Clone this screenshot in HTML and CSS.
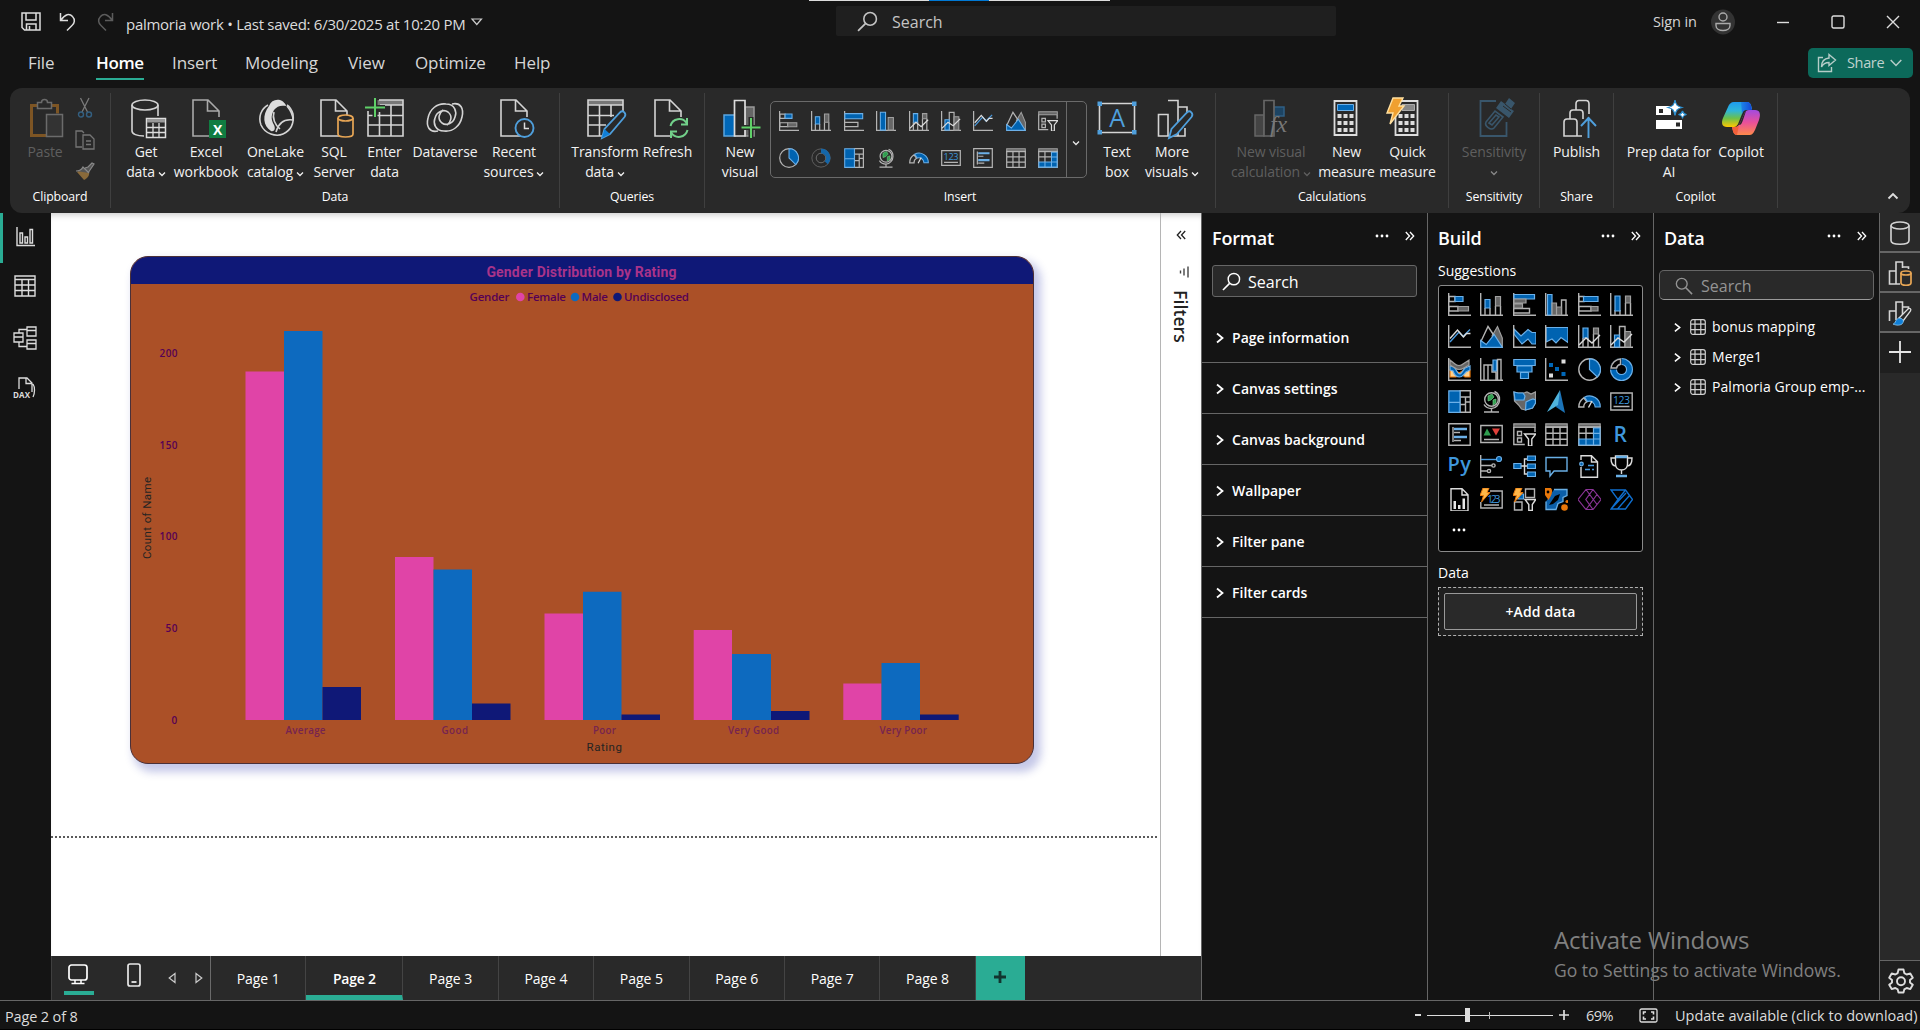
FILE: index.html
```html
<!DOCTYPE html>
<html lang="en">
<head>
<meta charset="utf-8">
<title>palmoria work</title>
<link rel="stylesheet" href="styles.css">
</head>
<body>
<svg class="defs" width="0" height="0" aria-hidden="true">
  <defs>
    <linearGradient id="cpA" x1="0" y1="0" x2="0" y2="1"><stop offset="0" stop-color="#1e9bf0"/><stop offset=".35" stop-color="#2fb6d8"/><stop offset=".65" stop-color="#6cc04a"/><stop offset="1" stop-color="#ffc800"/></linearGradient>
    <linearGradient id="cpB" x1="0" y1="0" x2="0" y2="1"><stop offset="0" stop-color="#a24be0"/><stop offset=".5" stop-color="#e9509a"/><stop offset="1" stop-color="#ff8a4a"/></linearGradient>
    <linearGradient id="cpC" x1="0" y1="0" x2="1" y2="0"><stop offset="0" stop-color="#1c86e8"/><stop offset="1" stop-color="#1546d8"/></linearGradient>

    <!-- chart glyphs, 23 unit box -->
    <symbol id="sbar" viewBox="0 0 23 23"><path class="a" d="M.7 0V22.300H23"/><path class="a" d="M1 3.500h6v5H1zM1 13.500h9v4.500H1z"/><path class="b" d="M7 3.500h8v5H7z"/><path class="g" d="M10 13.500h10.500v4.500H10z"/></symbol>
    <symbol id="scol" viewBox="0 0 23 23"><path class="a" d="M.7 0V22.300H23M5 15v7M10 15v7M15.500 13v9M20.500 13v9"/><path class="b" d="M5 6.500h5v8.500H5z"/><path class="g" d="M15.500 3.500h5V13h-5z"/></symbol>
    <symbol id="cbar" viewBox="0 0 23 23"><path class="a" d="M.7 0V22.300H23M1 15.500h15.500v4.500H1"/><path class="b" d="M1 1.500h20.500V6H1z"/><path class="g" d="M1 6h12v4H1zM1 11h8.500v4H1z"/></symbol>
    <symbol id="ccol" viewBox="0 0 23 23"><path class="a" d="M.7 0V22.300H23M16.500 22V7h4.500v15"/><path class="b" d="M2.500 1.500H7V22H2.500z"/><path class="g" d="M7 10h4.500v12H7zM11.500 14h5v8h-5z"/></symbol>
    <symbol id="cbar2" viewBox="0 0 23 23"><path class="a" d="M.7 0V22.300H23M1 13h15v5H1"/><path class="b" d="M1 3h20.500v6H1z"/></symbol>
    <symbol id="ccol2" viewBox="0 0 23 23"><path class="a" d="M.7 0V22.300H23"/><path class="b" d="M5 1.500h6V22H5z"/><path class="g" d="M14 7.500h6V22h-6z"/></symbol>
    <symbol id="hbar" viewBox="0 0 23 23"><path class="a" d="M.7 0V22.300H23M1 3.500h5v5H1zM1 13.500h12V18H1z"/><path class="b" d="M5.500 3.500h14.500v5H5.500z"/><path class="g" d="M13 13.500h7V18h-7z"/></symbol>
    <symbol id="hcol" viewBox="0 0 23 23"><path class="a" d="M.7 0V22.300H23M5 17v5M10 17v5M15.500 10v12M20.500 10v12"/><path class="b" d="M5 3h5v15H5z"/><path class="g" d="M15.500 3h5v7h-5z"/></symbol>
    <symbol id="line" viewBox="0 0 23 23"><path class="a" d="M.7 0V22.300H23"/><path class="l" d="M2 17L11 7l4 4.500 7-7"/><path class="w" d="M2 13.500L9.500 5l6 7 3-3.500h4"/></symbol>
    <symbol id="area" viewBox="0 0 23 23"><path class="g" d="M12 11l5.500-9.500L22.300 13v9z"/><path class="a" d="M.7 17L8 1.500l8 12"/><path class="b" d="M.7 15.500l5.500 4 8-10 8.100 12.800H.7z"/></symbol>
    <symbol id="sarea" viewBox="0 0 23 23"><path class="b" d="M1 4l7 7 7-6.500 4 3h4v11.500h-4l-4-5-6 5-8-10z"/><path class="a" d="M.7 0V22.300H23"/></symbol>
    <symbol id="harea" viewBox="0 0 23 23"><path class="b" d="M1 2.500h22v15l-7-5-5 5.500-4-4-6 3z"/><path class="a" d="M.7 0V22.300H23"/></symbol>
    <symbol id="lscol" viewBox="0 0 23 23"><path class="a" d="M.7 0V22.300H23M5 13v9M10 13v9M15.500 9v13M20.500 9v13"/><path class="b" d="M5 3h5v10H5z"/><path class="g" d="M15.500 3h5v6h-5z"/><path class="w" d="M1 20l7-7 6 5 8-8"/></symbol>
    <symbol id="lccol" viewBox="0 0 23 23"><path class="a" d="M.7 0V22.300H23M9.500 22V1.500H15V22"/><path class="b" d="M4.500 10h5v12h-5z"/><path class="g" d="M15 6.500h5.500V22H15z"/><path class="w" d="M1 20l7-7 6 4 8-8"/></symbol>
    <symbol id="ribbon" viewBox="0 0 23 23"><path d="M2 12h5l4 3 5-3h6v7h-5l-4-3-5 3H2z" fill="#ffd08a" stroke="#e8770a" stroke-width="1.200"/><path class="b" d="M2 8l4 1c2 1 3 7 5.500 7S15 12 17 10l5-2v4l-4 2c-2 2-3 5-6.500 5S6 16 5 13l-3-1z"/><path class="g" d="M2 2l5 4c2 2 6 2 8 0l6-4v5l-5 3c-3 2-7 2-9 0L2 7z"/><path class="a" d="M.7 0V22.300H23"/></symbol>
    <symbol id="wfall" viewBox="0 0 23 23"><path class="a" d="M.7 0V22.300H23M4 22V7h4v15M8 7h4v7h4v8M17.500 22V1.500H21V22"/><path class="b" d="M13 2h3.500v11H13z"/></symbol>
    <symbol id="funnel" viewBox="0 0 23 23"><path class="b" d="M.8 1.500h21.400v6H.8zM4 8h15v6H4zM7.500 14.500h8v6h-8z"/></symbol>
    <symbol id="scatter" viewBox="0 0 23 23"><path class="a" d="M.7 0V22.300H23"/><path d="M4 5h4v4H4zM10 9h4v4h-4zM16.500 14h4v4h-4z" fill="#0067b8"/><path d="M16.500 1.500h4v4h-4zM4 15.500h4v4H4z" fill="#ddd"/></symbol>
    <symbol id="pie" viewBox="0 0 23 23"><circle class="a" cx="11.500" cy="11.500" r="10.700"/><path class="b" d="M11.500.8a10.700 10.700 0 0 1 7.800 18.200l-7.800-7.500z"/></symbol>
    <symbol id="donut" viewBox="0 0 23 23"><circle cx="11.500" cy="11.500" r="8" fill="none" stroke="#6cb0e8" stroke-width="7"/><circle cx="11.500" cy="11.500" r="8" fill="none" stroke="#0067b8" stroke-width="4.800"/><path d="M11.500 0A11.500 11.500 0 0 0 0 11.500h7a4.500 4.500 0 0 1 4.500-4.500z" fill="#000"/><path class="a" d="M10.500 1A10.500 10.500 0 0 0 1 10h5.500a5 5 0 0 1 4-3.800z"/></symbol>
    <symbol id="donut2" viewBox="0 0 23 23"><circle cx="11.500" cy="11.500" r="10.500" fill="none" stroke="#666"/><circle cx="11.500" cy="11.500" r="5.500" fill="none" stroke="#777"/><path d="M11.500 3.500a8 8 0 0 1 6 13.500" fill="none" stroke="#1566a8" stroke-width="5"/></symbol>
    <symbol id="tree" viewBox="0 0 23 23"><path class="a" d="M12 .8h10.300v21.400H12zM12 7h10M12 14.500h5.500M17.500 7v15M17.500 12h5"/><path class="b" d="M.8.800H12v11.500H.8zM.8 12.300H12v10H.8z"/></symbol>
    <symbol id="globe" viewBox="0 0 23 23"><circle cx="11.500" cy="9.500" r="6.800" class="a"/><path d="M8 6l4-2 2 3-3 3-3 1zM13 10l3-1v4l-3 2z" fill="#2f9e4f" stroke="#7bd68e" stroke-width=".6"/><path class="a" d="M14.500 1.500a8.500 8.500 0 0 1 5 8.500c0 4-3.500 8.500-8 8.500-3.500 0-6-1.500-7.500-4M11.500 18.500v3.500M4 22h15"/></symbol>
    <symbol id="fmap" viewBox="0 0 23 23"><path class="g" d="M1 2l4 1h6l3-1 4 2 4.500-2v11l-3 5-7 2-4-1-3-4-4-4z"/><path class="b" d="M1 2l4 1h5l2 3-1 4H2zM13 12l4-2 3-1 2.500 1v3l-3 5-7 2z"/></symbol>
    <symbol id="azmap" viewBox="0 0 23 23"><path d="M15 0l5 23-9-6z" fill="#1c74b8"/><path d="M15 0L2 22l11-7z" fill="#4fb4de"/></symbol>
    <symbol id="gauge" viewBox="0 0 23 23"><path class="a" d="M.8 17a10.700 10.700 0 0 1 5-9.200l3 4a5.500 5.500 0 0 0-3 5.200z"/><path class="b" d="M6.500 7.200A10.700 10.700 0 0 1 22.200 17h-5a6 6 0 0 0-7.700-5.500z"/><path class="w" d="M10.500 17.500l3.500-6.500"/></symbol>
    <symbol id="card" viewBox="0 0 23 23"><path class="a" d="M.8 3h21.400v17H.8zM3.500 16.500h16"/><text x="3" y="14.200" class="num" textLength="17">123</text></symbol>
    <symbol id="mcard" viewBox="0 0 23 23"><path class="a" d="M.8.800h21.400v21.400H.8zM5 4v15M6 9.500h6M6 17.500h7"/><path d="M6 6h13M6 14h13" stroke="#6cb0e8" stroke-width="2.500"/></symbol>
    <symbol id="kpi" viewBox="0 0 23 23"><path class="a" d="M.8 2.500h21.400v17H.8zM4 16.500h15"/><path d="M3.500 12.500L7 5.500l4 7z" fill="#2f9e4f"/><path d="M12 5.500h8l-4 7z" fill="#e0403a"/></symbol>
    <symbol id="slicer" viewBox="0 0 23 23"><path class="g" d="M.8.800h21.400v3.500H.8z"/><path class="a" d="M22 9V4.500M.8 4v17.500h11M4.500 8.500h4v4h-4zM4.500 15h4v4h-4z"/><path class="w" d="M11.500 11h11.300l-4 5v7h-3.300v-7z"/></symbol>
    <symbol id="table" viewBox="0 0 23 23"><path class="g" d="M.8.800h21.400v3.500H.8z"/><path class="a" d="M.8 4h21.400v18.200H.8zM.8 10.300h21.400M.8 16.200h21.400M8 4v18M15 4v18"/></symbol>
    <symbol id="matrix" viewBox="0 0 23 23"><path class="g" d="M.8.800h21.400v3.500H.8z"/><path class="a" d="M.8 4h21.400v18.200H.8zM.8 10.300h21.400M8 4v18"/><path class="b" d="M15.500 5h6.500v17H1v-6h14.500zM8 16v6M15.500 10.300H22M15.500 16H22M15.500 16v6"/></symbol>
    <symbol id="rviz" viewBox="0 0 23 23"><text x="3.500" y="19" class="ltr" font-size="21">R</text></symbol>
    <symbol id="pyviz" viewBox="0 0 23 23"><text x="-.5" y="16" class="ltr" font-size="20" textLength="23.500">Py</text></symbol>
    <symbol id="keyinf" viewBox="0 0 23 23"><path class="a" d="M.7 0V22.300H23M1 10.500h11M1 16h7"/><circle class="a" cx="13.500" cy="10.500" r="1.600"/><circle class="a" cx="9" cy="16" r="1.600"/><path class="l" d="M1 4.500h15"/><circle class="b" cx="19" cy="4" r="2.500"/></symbol>
    <symbol id="decomp" viewBox="0 0 23 23"><path class="w" d="M8 11h6M11.500 11V4h3M11.500 11v8h3"/><path class="b" d="M.8 8.500H8v5H.8zM14.500 1h8v4.500h-8zM14.500 9h8v4.500h-8zM14.500 17h8v4.500h-8z"/></symbol>
    <symbol id="qna" viewBox="0 0 23 23"><path d="M1 2.500h21v13.500H9l-4 5v-5H1z" fill="none" stroke="#69afe5" stroke-width="1.400"/></symbol>
    <symbol id="narr" viewBox="0 0 23 23"><path class="w" d="M3 5V.800h10.500l6 6v15.500H3V12M13.500 1v6h6"/><circle class="b" cx="3.500" cy="9" r="1.800"/><path class="l" d="M10 10.500h6M7 14.500h5M14 14.500h2"/></symbol>
    <symbol id="goals" viewBox="0 0 23 23"><path class="w" d="M5.500 1h12v8c0 4-3 6-6 6s-6-2-6-6zM5.500 3H1c0 5 2 8 5 8M17.500 3H22c0 5-2 8-5 8M11.500 15v4"/><path d="M6 2h11M6 21h11" stroke="#69afe5" stroke-width="2.500"/></symbol>
    <symbol id="pagin" viewBox="0 0 23 23"><path class="w" d="M3 .800h11l6 6v16.200H3zM14 1v6h6"/><path d="M5.500 13H8v8H5.500zM10 17h2.500v4H10zM14.500 10.500H17V21h-2.500z" fill="#e8e8e8"/></symbol>
    <symbol id="newcard" viewBox="0 0 23 23"><path class="a" d="M10 3h12.200v17H.8v-6M4 17h15"/><text x="7" y="15" class="num" textLength="13.500">123</text><path class="o" d="M3 0h6L7 4.500h3L1.500 14l2-6.500H0z"/></symbol>
    <symbol id="newslc" viewBox="0 0 23 23"><path class="a" d="M12.500 1h9v8.500h-9zM1.500 14H9v8H1.500z"/><path class="b" d="M7 6h3.500v5H5z"/><path class="w" d="M12 11.500h10.800l-3.500 5v6h-3.500v-6z"/><path class="o" d="M3 0h6L7 4.500h3L1.500 14l2-6.500H0z"/></symbol>
    <symbol id="arcgis" viewBox="0 0 23 23"><path d="M9 1.500h13v6l-4 2v4l-5 2-2 6H1v-8" fill="#0b5ea8" stroke="#69afe5" stroke-width="1.300"/><path d="M10 8l5-2-2 6-5 4-4 1z" fill="#000"/><path d="M3 -1a4 4 0 0 1 4 5c0 3-2 5-3.500 8C2 9 -1 7 -1 4a4 4 0 0 1 4-5z" fill="#e8770a"/><circle cx="19.500" cy="19.500" r="3.300" fill="#e8770a"/><circle cx="22" cy="13.500" r="1.600" fill="#e8770a"/><circle cx="3" cy="4" r="1.400" fill="#000"/></symbol>
    <symbol id="papps" viewBox="0 0 23 23"><path d="M8 1.500h7l8 10-8 10H8L0 11.500zM8 21.500L19 6.500M8 1.500l11 15M15 1.500L7.800 11.500l7.200 10" fill="none" stroke="#8a3496" stroke-width="1.200"/></symbol>
    <symbol id="pauto" viewBox="0 0 23 23"><path d="M1 2h14.500l7 9.500-7 9.500H1l7-9.500zM8 11.500L15.500 2M1 21L16 5M7.500 21L19.500 7.500" fill="none" stroke="#0f6fd0" stroke-width="1.300"/></symbol>

    <symbol id="chev" viewBox="0 0 8 6"><path d="M1 1.500l3 3 3-3" fill="none" stroke="currentColor" stroke-width="1.300"/></symbol>
    <symbol id="right" viewBox="0 0 8 12"><path d="M1 1.500l5.500 4.500L1 10.500" fill="none" stroke="currentColor" stroke-width="1.800"/></symbol>
    <symbol id="dbl" viewBox="0 0 10 10"><path d="M.8 1L4.500 5 .8 9M5 1l3.700 4L5 9" fill="none" stroke="currentColor" stroke-width="1.300"/></symbol>
    <symbol id="mag" viewBox="0 0 20 20"><circle cx="12.500" cy="7.500" r="6" fill="none" stroke="currentColor" stroke-width="1.500"/><path d="M8 12l-7 7" stroke="currentColor" stroke-width="1.700"/></symbol>
    <symbol id="dots" viewBox="0 0 14 4"><circle cx="2" cy="2" r="1.400"/><circle cx="7" cy="2" r="1.400"/><circle cx="12" cy="2" r="1.400"/></symbol>
    <symbol id="tbl" viewBox="0 0 16 16"><path d="M3 .7h10a2.300 2.300 0 0 1 2.300 2.300v10a2.300 2.300 0 0 1-2.300 2.300H3A2.300 2.300 0 0 1 .7 13V3A2.300 2.300 0 0 1 3 .7zM5 1v14M10.800 1v14M1 5.200h14M1 10.600h14" fill="none" stroke="#d0d0d0" stroke-width="1.200"/></symbol>
    <symbol id="calc" viewBox="0 0 24 36"><path d="M1 1h22v34H1z" fill="#292929" stroke="#ddd" stroke-width="1.800"/><path d="M4 14h4v4H4zM10 14h4v4h-4zM16 14h4v4h-4zM4 21h4v4H4zM10 21h4v4h-4zM16 21h4v4h-4zM4 28h4v4H4zM10 28h4v4h-4zM16 28h4v4h-4z" fill="#ddd"/></symbol>
    <symbol id="doc" viewBox="0 0 40 40"><path class="W" d="M27 38H7V2h15l11 11v6M21.500 2.500V13H33"/></symbol>
  </defs>
</svg>

<div class="app">
  <header class="titlebar">
    <div class="tb-left">
      <svg width="20" height="19" viewBox="0 0 20 19"><path d="M1 1h18v17H3.500L1 15.500zM5 1v7h10V1M5.500 18v-6h9.500v6M8.500 14v4" fill="none" stroke="#ddd" stroke-width="1.500"/></svg>
      <svg class="undo" width="18" height="19" viewBox="0 0 18 19"><path d="M1.500 1v7.500H9M2 8c4-6 8.500-7 11.500-3.500 3 3 2 7-.5 9L8 18.500" fill="none" stroke="#ddd" stroke-width="1.500"/></svg>
      <svg class="redo" width="18" height="19" viewBox="0 0 18 19"><path d="M16.500 1v7.500H9M16 8C12 2 7.500 1 4.500 4.500c-3 3-2 7 .5 9l5 5" fill="none" stroke="#5c5c5c" stroke-width="1.500"/></svg>
      <span class="doc-name">palmoria work • Last saved: 6/30/2025 at 10:20 PM</span>
      <svg class="tri" width="12" height="8" viewBox="0 0 12 8"><path d="M1 1h9.500L5.800 6.500z" fill="none" stroke="#ccc" stroke-width="1.200"/></svg>
    </div>
    <div class="tb-search"><svg width="21" height="21"><use href="#mag"/></svg><span>Search</span></div>
    <div class="tb-right">
      <span class="signin">Sign in</span>
      <svg width="24" height="26" viewBox="0 0 24 26"><ellipse cx="12" cy="13" rx="12" ry="12.500" fill="#333"/><circle cx="12" cy="8" r="4" fill="none" stroke="#aaa" stroke-width="1.400"/><path d="M5 14.500h14v2c0 3-3 5-7 5s-7-2-7-5z" fill="none" stroke="#aaa" stroke-width="1.400"/></svg>
      <svg class="w-min" width="14" height="14"><path d="M1 7.500h12" stroke="#ddd" stroke-width="1.400"/></svg>
      <svg class="w-max" width="14" height="14"><rect x="1" y="1" width="12" height="12" rx="1.500" fill="none" stroke="#ddd" stroke-width="1.400"/></svg>
      <svg class="w-cls" width="14" height="14"><path d="M1 1l12 12M13 1L1 13" stroke="#ddd" stroke-width="1.400"/></svg>
    </div>
    <div class="topstrip"><i></i></div>
  </header>

  <nav class="tabs">
    <span class="t-file">File</span><span class="t-home"><b>Home</b></span><span class="t-insert">Insert</span><span class="t-model">Modeling</span><span class="t-view">View</span><span class="t-opt">Optimize</span><span>Help</span>
    <button class="share"><svg width="20" height="20" viewBox="0 0 20 20"><path d="M6 4.500H1.500v14h13V14M12 1.500l6.500 5.500-6.500 5.500V9.500c-4 0-6 1.500-7.500 4.500 0-5 2.500-8.500 7.500-9z" fill="none" stroke="#b5cdc8" stroke-width="1.400"/></svg><span>Share</span><svg width="12" height="8" viewBox="0 0 12 8"><path d="M.7 1l5.300 5.500L11.300 1" fill="none" stroke="#b5cdc8" stroke-width="1.500"/></svg></button>
  </nav>

  <section class="ribbon">
    <div class="grp g-clip">
      <div class="items">
        <div class="it off w-paste"><svg class="big" viewBox="-2.500 -.5 40 40"><path d="M11 7H4v30h16M24 7h6v8" fill="none" stroke="#7d5524" stroke-width="3"/><path d="M10 4h4c0-4 6-4 6 0h4v6H10z" fill="#292929" stroke="#6b6b6b" stroke-width="1.500"/><path d="M19 16h16v22H19z" fill="#333" stroke="#6b6b6b" stroke-width="1.500"/></svg><span>Paste</span></div>
        <div class="smalls">
          <svg width="16" height="20" viewBox="0 0 16 20"><path d="M3.500 0l7 14M12 0L5 14" fill="none" stroke="#7a7a7a" stroke-width="1.300"/><circle cx="4" cy="16.500" r="2.500" fill="none" stroke="#335f80" stroke-width="1.400"/><circle cx="12" cy="16.500" r="2.500" fill="none" stroke="#335f80" stroke-width="1.400"/></svg>
          <svg width="20" height="20" viewBox="0 0 20 20"><path d="M7 17H1V1h6l2 2M8 5h7l4 4v10H8zM11 11h5M11 14.500h5" fill="none" stroke="#757575" stroke-width="1.300"/></svg>
          <svg width="20" height="19" viewBox="0 0 20 19"><path d="M2 10l7 8c4-2 6-5 5-9L9 6z" fill="#8a6a3a"/><path d="M1 9c4 0 6-2 7-4l6 6M10 6l3-1 4-4 2 1-4 6-2 3" fill="#555" stroke="#8a8a8a" stroke-width="1.200"/></svg>
        </div>
      </div>
      <h6>Clipboard</h6>
    </div>
    <div class="grp g-data">
      <div class="items">
        <div class="it w54"><svg class="big" viewBox="0 0 40 40"><ellipse class="W" cx="19" cy="7" rx="13" ry="5"/><path class="W" d="M6 7v26c0 3 5 5 12 5M32 7v11"/><path d="M20.500 20.500h19v19h-19z" fill="#292929" stroke="#ddd" stroke-width="1.500"/><path d="M21 21h18v3.500H21z" fill="#999"/><path d="M20.500 29.500h19M20.500 34.500h19M27 25v14M33 25v14" stroke="#ddd" stroke-width="1.300"/></svg><span>Get</span><span>data<svg class="cv"><use href="#chev"/></svg></span></div>
        <div class="it w66"><svg class="big" viewBox="0 0 40 40"><use class="dim" href="#doc" width="40" height="40"/><rect x="23" y="22" width="17" height="18" fill="#107c41"/><text x="31.500" y="36.500" text-anchor="middle" class="xl">X</text></svg><span>Excel</span><span>workbook</span></div>
        <div class="it w73"><svg class="big" viewBox="0 0 40 40"><path class="W" d="M12 7C5 11 2 19 5 27c4 9 15 12 22 9 9-4 11-12 10-20-1-3-3-7-6-9"/><path d="M13 8C15 3 19 1 24 2c3 1 6 4 6 6-5-1-9 0-12 4-4 7-2 11 0 15 2 4 0 7-3 6C7 28 6 17 13 8z" fill="#ddd"/><path class="W" d="M31 8c5 6 6 10 6 14-7-1-14 1-17 12M18 14c-2 6 1 13 6 17"/></svg><span>OneLake</span><span>catalog<svg class="cv"><use href="#chev"/></svg></span></div>
        <div class="it w44"><svg class="big" viewBox="0 0 40 40"><use href="#doc" width="40" height="40"/><path d="M24 20v16c0 4 15 4 15 0V20" fill="#292929" stroke="#e8a655" stroke-width="1.700"/><ellipse cx="31.500" cy="20" rx="7.500" ry="3" fill="#292929" stroke="#e8a655" stroke-width="1.700"/></svg><span>SQL</span><span>Server</span></div>
        <div class="it w57"><svg class="big" viewBox="0 0 40 40"><path d="M12 2h26v5H12z" fill="#777"/><path class="W" d="M14 2h24v36H3V13M3 17.500h35M3 27h35M14.500 14v24M26 7v31M15 7h23"/><path d="M10 0v19M0 9.500h20" stroke="#292929" stroke-width="5"/><path d="M10 0v19M0 9.500h20" stroke="#5fd068" stroke-width="2"/></svg><span>Enter</span><span>data</span></div>
        <div class="it w64"><svg class="big" viewBox="0 0 40 40"><path class="W" d="M13 33C4 35 1 28 3 20 5 11 12 5 21 6c9 0 11 8 9 13-2 7-9 9-13 6-5-4-3-10 1-13M27 6c9-2 12 5 10 13-2 9-9 15-18 14-9 0-11-8-9-13 2-7 9-9 13-6 5 4 3 10-1 13"/></svg><span>Dataverse</span></div>
        <div class="it w74"><svg class="big" viewBox="0 0 40 40"><use href="#doc" width="40" height="40"/><circle cx="30.500" cy="30" r="9" fill="#292929" stroke="#4f9fdc" stroke-width="1.900"/><path d="M30.500 24.500v6h4.500" fill="none" stroke="#ddd" stroke-width="1.500"/></svg><span>Recent</span><span>sources<svg class="cv"><use href="#chev"/></svg></span></div>
      </div>
      <h6>Data</h6>
    </div>
    <div class="grp g-query">
      <div class="items">
        <div class="it w73"><svg class="big" viewBox="0 0 40 40"><path d="M3 2h35v5H3z" fill="#777"/><path class="W" d="M38 14V2H3v36h14M3 7h35M3 17.500h26M3 27h18M14.500 7v31M26 7v12"/><path d="M17 40l2.500-9L35 14.500c3-3 7 1 4.500 4.500L25 36z" fill="#292929" stroke="#4f9fdc" stroke-width="1.800"/><path d="M17 40l2.500-9 5.500 5z" fill="#0f7fd8"/></svg><span>Transform</span><span>data<svg class="cv"><use href="#chev"/></svg></span></div>
        <div class="it w52"><svg class="big" viewBox="0 0 40 40"><use href="#doc" width="40" height="40"/><circle cx="31" cy="30" r="11" fill="#292929"/><path d="M22.500 28c2-8 12-9 16-3M39 20v6.500h-6M39.500 32c-2 8-12 9-16 3M23 40v-6.500h6" fill="none" stroke="#72d08a" stroke-width="2"/></svg><span>Refresh</span></div>
      </div>
      <h6>Queries</h6>
    </div>
    <div class="grp g-insert">
      <div class="items">
        <div class="it w56"><svg class="big" viewBox="0 0 40 40"><path d="M4 17h11v21H4z" fill="#0067b8" stroke="#5aa5e0" stroke-width="1.500"/><path d="M25 9h9v29h-9z" fill="#666" stroke="#999" stroke-width="1.500"/><path d="M14.500 2.500H25V38H14.500z" fill="#292929" stroke="#ddd" stroke-width="1.700"/><path d="M31 19v21M21 29.500h19" stroke="#292929" stroke-width="5"/><path d="M31 20v20M21.500 29.500h19" stroke="#5fd068" stroke-width="2"/></svg><span>New</span><span>visual</span></div>
        <div class="gallery">
          <div class="gal-grid">
            <svg><use href="#sbar"/></svg><svg><use href="#scol"/></svg><svg><use href="#cbar2"/></svg><svg><use href="#ccol2"/></svg><svg><use href="#lscol"/></svg><svg><use href="#lccol"/></svg><svg><use href="#line"/></svg><svg><use href="#area"/></svg><svg><use href="#slicer"/></svg>
            <svg><use href="#pie"/></svg><svg><use href="#donut2"/></svg><svg><use href="#tree"/></svg><svg><use href="#globe"/></svg><svg><use href="#gauge"/></svg><svg><use href="#card"/></svg><svg><use href="#mcard"/></svg><svg><use href="#table"/></svg><svg><use href="#matrix"/></svg>
          </div>
          <div class="gal-more"><svg class="cv"><use href="#chev"/></svg></div>
        </div>
        <div class="it w54"><svg class="big" viewBox="0 0 40 40"><path class="W" d="M2.500 5.500h35v29h-35z"/><path d="M.5 3.500h4.500v4.500H.5zM35 3.500h4.500v4.500H35zM.5 32h4.500v4.500H.5zM35 32h4.500v4.500H35z" fill="#4f9fdc"/><text x="20" y="29" text-anchor="middle" class="tA">A</text></svg><span>Text</span><span>box</span></div>
        <div class="it w56"><svg class="big" viewBox="-1 0 40 40"><path class="W" d="M5.500 16.500H15V38H5.500zM15 2.500h10V38H15M25 9h9v6M32 30v8H15"/><path d="M16 40l2.500-9L34 14.500c3-3 7 1 4.500 4.500L24 36z" fill="#292929" stroke="#4f9fdc" stroke-width="1.800"/></svg><span>More</span><span>visuals<svg class="cv"><use href="#chev"/></svg></span></div>
      </div>
      <h6>Insert</h6>
    </div>
    <div class="grp g-calc">
      <div class="items">
        <div class="it off w86"><svg class="big" viewBox="0 0 40 40"><path d="M4 17h9v21H4z" fill="#444" stroke="#666" stroke-width="1.500"/><path d="M22 9h11v9H22z" fill="#1d4463" stroke="#2f5f85" stroke-width="1.500"/><path d="M13 2.500h10V38H13z" fill="#292929" stroke="#666" stroke-width="1.700"/><text x="19" y="34" class="fx">fx</text></svg><span>New visual</span><span>calculation<svg class="cv"><use href="#chev"/></svg></span></div>
        <div class="it w65"><svg class="big" viewBox="1 0 40 40"><use href="#calc" x="7" y="2" width="25" height="36"/><path d="M11.500 6.500h16v6h-16z" fill="#0067b8" stroke="#6cb0e8"/></svg><span>New</span><span>measure</span></div>
        <div class="it w57"><svg class="big" viewBox="1 0 40 40"><use href="#calc" x="7" y="2" width="25" height="36"/><path d="M15 6.500h12.500v6H15z" fill="#888" stroke="#aaa"/><path d="M6 0h10l-4 8h5L3 26l3-11H0z" fill="#f0a030" stroke="#ffe0a0" stroke-width="1.400"/></svg><span>Quick</span><span>measure</span></div>
      </div>
      <h6>Calculations</h6>
    </div>
    <div class="grp g-sens">
      <div class="items">
        <div class="it off w73"><svg class="big" viewBox="0 0 40 40"><path d="M22 3H6.500v35h26V24" fill="none" stroke="#39566b" stroke-width="1.800"/><path d="M12 24l9-11 8 6-9 11c-3 3-10-2-8-6zM15 25l7-8 3 2-7 8z" fill="none" stroke="#39566b" stroke-width="1.600"/><path d="M22 10l5-7 4 3 4-6 6 5-4 6 3 2-5 7z" fill="#39566b"/><path d="M31 6l6 5M29 8l8 6" stroke="#292929"/></svg><span>Sensitivity</span><span><svg class="cv solo"><use href="#chev"/></svg></span></div>
      </div>
      <h6>Sensitivity</h6>
    </div>
    <div class="grp g-share">
      <div class="items">
        <div class="it w52"><svg class="big" viewBox="1 0 40 40"><path class="W" d="M26 38H8V24c0-2 1-3 3-3h7c2 0 3 1 3 3v14M14 21v-6c0-2 1-3 3-3h7c2 0 3 1 3 3v6M20 12V6c0-2 1-3.500 3-3.500h7c2 0 3 1.500 3 3.500v10"/><path d="M32.500 40V19M25 28l7.500-8 7.500 8" fill="none" stroke="#4f9fdc" stroke-width="1.900"/></svg><span>Publish</span></div>
      </div>
      <h6>Share</h6>
    </div>
    <div class="grp g-cop">
      <div class="items">
        <div class="it w94"><svg class="big" viewBox="0 0 40 40"><path d="M7 8h15v9H7zM7 22h26v9H7z" fill="#fff"/><path d="M10 11h4v4h-4zM27 24.500h4v4h-4z" fill="#292929"/><path d="M26 2c1 5 2 6 7 7.500-5 1.500-6 2.500-7 8-1-5.500-2-6.500-7-8 5-1.500 6-2.500 7-7.500zM33.500 13c.5 2 1 3 4 3.500-3 1-3.500 1.500-4 4-.5-2.500-1-3-4-4 3-.500 3.500-1.500 4-3.500z" fill="#fff" stroke="#2a8fd0" stroke-width="1.200"/></svg><span>Prep data for</span><span>AI</span></div>
        <div class="it w50"><svg class="big" viewBox="0 0 40 40"><path d="M13 4h13c3 0 4 2 5 7h-5c-3 0-4 2-5 5L17 26c-2 3-3 3-5 3H6c-5 0-6-4-4-9L7 9c1-3 3-5 6-5z" fill="url(#cpA)"/><path d="M20 4h6c3 0 4 2 5 8h-5c-3 0-4 1-5 4z" fill="url(#cpC)"/><path d="M28 37H16c-3 0-4-3-5-8h3c3 0 4-2 5-4l4-9c1-3 3-4 5-4h6c5 0 6 4 4 10l-4 10c-2 4-3 5-6 5z" fill="url(#cpB)"/><path d="M11 29h3c2 0 3-1 4-2l-2 10c-3 0-4-3-5-8z" fill="#f2603a"/><path d="M19 25l4-9c1-2 1-3 2-3l-3 9c-1 3-2 5-4 5z" fill="#292929"/></svg><span>Copilot</span></div>
      </div>
      <h6>Copilot</h6>
    </div>
    <div class="ribbon-end"><svg width="12" height="8" viewBox="0 0 12 8"><path d="M1.500 6.500L6 2l4.500 4.500" fill="none" stroke="#ddd" stroke-width="1.900"/></svg></div>
  </section>

  <main class="main">
    <aside class="rail">
      <div class="on"><svg width="20" height="20" viewBox="0 0 20 20"><path d="M1 0v18.500h18M4 16V6h2.500v10zM9 16V10h2.500v6zM14 16V2.500h2.500V16z" fill="none" stroke="#ddd" stroke-width="1.400"/></svg></div>
      <div class="r2"><svg width="22" height="22" viewBox="0 0 22 22"><path d="M1 1h20v20H1zM1 4.500h20M1 10h20M1 15.500h20M8 4.500V21M14.500 4.500V21" fill="none" stroke="#ddd" stroke-width="1.400"/></svg></div>
      <div><svg width="24" height="24" viewBox="0 0 24 24"><path d="M1 7h9v9H1zM1 11h9M14 1h9v9h-9zM14 4.500h9M14 14h9v9h-9zM14 17.500h9M6 7V3.500h8M6 16v4.500h8" fill="none" stroke="#ddd" stroke-width="1.300"/></svg></div>
      <div><svg width="24" height="24" viewBox="0 0 24 24"><path d="M6 13V2h8l5 5v9M13 2v5.500h6M20 8c2 3 2 9 0 13" fill="none" stroke="#ddd" stroke-width="1.300"/><text x="0" y="22" class="dax" textLength="17">DAX</text></svg></div>
    </aside>

    <div class="center">
      <div class="canvas-row">
        <div class="canvas">
          <article class="visual">
            <h2>Gender Distribution by Rating</h2>
            <svg class="chart" viewBox="131 284 901 479" width="901" height="479">
              <g class="leg">
                <text x="469.500" y="301" textLength="40">Gender</text>
                <circle cx="520.300" cy="297" r="4.300" fill="#e044a7"/><text x="527" y="301" textLength="39">Female</text>
                <circle cx="575" cy="297" r="4.300" fill="#0d6abf"/><text x="581.500" y="301" textLength="26.500">Male</text>
                <circle cx="617.500" cy="297" r="4.300" fill="#0f1877"/><text x="624" y="301" textLength="65">Undisclosed</text>
              </g>
              <g class="yt">
                <text x="159.500" y="357" textLength="18">200</text><text x="159.500" y="448.500" textLength="18">150</text><text x="159.500" y="540" textLength="18">100</text><text x="165.500" y="632" textLength="12">50</text><text x="171.500" y="723.500">0</text>
              </g>
              <text class="ax" transform="translate(151 559) rotate(-90)" textLength="82">Count of Name</text>
              <g fill="#e044a7"><path d="M245.500 371.500h38.500V720h-38.500zM395 557h38.500v163H395zM544.500 613.500H583V720h-38.500zM693.700 630H732v90h-38.300zM843.300 683.400h38.200V720h-38.200z"/></g>
              <g fill="#0d6abf"><path d="M284 331h38.500v389H284zM433.500 569.500H472V720h-38.500zM583 591.700h38.500V720H583zM732 654h39v66h-39zM881.500 663H920v57h-38.500z"/></g>
              <g fill="#0f1877"><path d="M322.500 687H361v33h-38.500zM472 703.500h38.500V720H472zM621.500 714.500h38.500v5.500h-38.500zM771 711h38.500v9H771zM920 714.500h38.700v5.500H920z"/></g>
              <g class="xt">
                <text x="285.500" y="734" textLength="40">Average</text><text x="441.500" y="734" textLength="26.500">Good</text><text x="593" y="734" textLength="23">Poor</text><text x="728" y="734" textLength="51">Very Good</text><text x="879.500" y="734" textLength="47.500">Very Poor</text>
              </g>
              <text class="ax" x="586.500" y="751" textLength="35.500">Rating</text>
            </svg>
          </article>
          <div class="page-edge"></div>
        </div>
        <aside class="filters">
          <svg class="flip" width="10" height="10"><use href="#dbl"/></svg>
          <svg width="12" height="12" viewBox="0 0 12 12"><path d="M10 .5v11M6 2.500v7M2.500 4.500v3" fill="none" stroke="#444" stroke-width="1.400"/></svg>
          <span>Filters</span>
        </aside>
      </div>
      <footer class="pages">
        <div class="views">
          <div class="v-desk"><svg width="22" height="21" viewBox="0 0 22 21"><rect x="2" y="1" width="18" height="15" rx="2.500" fill="none" stroke="#fff" stroke-width="1.700"/><path d="M8 16v3M14 16v3M4.500 19.500h13" stroke="#fff" stroke-width="1.500"/></svg></div>
          <svg class="v-ph" width="14" height="24" viewBox="0 0 14 24"><rect x="1" y="1" width="12" height="22" rx="2" fill="none" stroke="#e8e8e8" stroke-width="1.700"/><path d="M4.500 19h5" stroke="#e8e8e8" stroke-width="1.800"/></svg>
          <svg class="v-a1" width="8" height="12" viewBox="0 0 8 12"><path d="M7 1.500v9L1.200 6z" fill="none" stroke="#ccc" stroke-width="1.200"/></svg>
          <svg class="v-a2" width="8" height="12" viewBox="0 0 8 12"><path d="M1 1.500v9L6.800 6z" fill="none" stroke="#ccc" stroke-width="1.200"/></svg>
        </div>
        <span>Page 1</span><span class="cur">Page 2</span><span>Page 3</span><span>Page 4</span><span>Page 5</span><span>Page 6</span><span>Page 7</span><span>Page 8</span>
        <button class="add"><svg width="12" height="12"><path d="M6 0v12M0 6h12" stroke="#12352f" stroke-width="2.800"/></svg></button>
      </footer>
    </div>

    <section class="pane p-format">
      <header><h3>Format</h3><svg class="dots"><use href="#dots"/></svg><svg class="dbl"><use href="#dbl"/></svg></header>
      <div class="search"><svg width="19" height="19"><use href="#mag"/></svg>Search</div>
      <ul>
        <li><svg><use href="#right"/></svg>Page information</li>
        <li><svg><use href="#right"/></svg>Canvas settings</li>
        <li><svg><use href="#right"/></svg>Canvas background</li>
        <li><svg><use href="#right"/></svg>Wallpaper</li>
        <li><svg><use href="#right"/></svg>Filter pane</li>
        <li><svg><use href="#right"/></svg>Filter cards</li>
      </ul>
    </section>

    <section class="pane p-build">
      <header><h3>Build</h3><svg class="dots"><use href="#dots"/></svg><svg class="dbl"><use href="#dbl"/></svg></header>
      <p class="lab">Suggestions</p>
      <div class="vizbox">
        <svg><use href="#sbar"/></svg><svg><use href="#scol"/></svg><svg><use href="#cbar"/></svg><svg><use href="#ccol"/></svg><svg><use href="#hbar"/></svg><svg><use href="#hcol"/></svg>
        <svg><use href="#line"/></svg><svg><use href="#area"/></svg><svg><use href="#sarea"/></svg><svg><use href="#harea"/></svg><svg><use href="#lscol"/></svg><svg><use href="#lccol"/></svg>
        <svg><use href="#ribbon"/></svg><svg><use href="#wfall"/></svg><svg><use href="#funnel"/></svg><svg><use href="#scatter"/></svg><svg><use href="#pie"/></svg><svg><use href="#donut"/></svg>
        <svg><use href="#tree"/></svg><svg><use href="#globe"/></svg><svg><use href="#fmap"/></svg><svg><use href="#azmap"/></svg><svg><use href="#gauge"/></svg><svg><use href="#card"/></svg>
        <svg><use href="#mcard"/></svg><svg><use href="#kpi"/></svg><svg><use href="#slicer"/></svg><svg><use href="#table"/></svg><svg><use href="#matrix"/></svg><svg><use href="#rviz"/></svg>
        <svg><use href="#pyviz"/></svg><svg><use href="#keyinf"/></svg><svg><use href="#decomp"/></svg><svg><use href="#qna"/></svg><svg><use href="#narr"/></svg><svg><use href="#goals"/></svg>
        <svg><use href="#pagin"/></svg><svg><use href="#newcard"/></svg><svg><use href="#newslc"/></svg><svg><use href="#arcgis"/></svg><svg><use href="#papps"/></svg><svg><use href="#pauto"/></svg>
        <svg class="dots"><use href="#dots"/></svg>
      </div>
      <p class="lab lab2">Data</p>
      <div class="drop"><button>+Add data</button></div>
    </section>

    <section class="pane p-data">
      <header><h3>Data</h3><svg class="dots"><use href="#dots"/></svg><svg class="dbl"><use href="#dbl"/></svg></header>
      <div class="search s2"><svg class="flip" width="18" height="18"><use href="#mag"/></svg>Search</div>
      <div class="tree">
        <div><svg class="r"><use href="#right"/></svg><svg class="t"><use href="#tbl"/></svg>bonus mapping</div>
        <div><svg class="r"><use href="#right"/></svg><svg class="t"><use href="#tbl"/></svg>Merge1</div>
        <div><svg class="r"><use href="#right"/></svg><svg class="t"><use href="#tbl"/></svg>Palmoria Group emp-...</div>
      </div>
    </section>

    <aside class="strip">
      <div class="c"><svg width="24" height="26" viewBox="0 0 24 26"><ellipse class="W" cx="12" cy="5.500" rx="9" ry="3.500"/><path class="W" d="M3 5.500v15c0 5 18 5 18 0v-15"/></svg></div>
      <div class="c"><svg width="24" height="26" viewBox="0 0 24 26"><path class="W" d="M12 24H1.500V11H8M8 24V2h6.500v6M14.500 7h6v2"/><path d="M13 13v10c0 3 10 3 10 0V13" fill="#292929" stroke="#e8a655" stroke-width="1.700"/><ellipse cx="18" cy="13" rx="5" ry="2" fill="#292929" stroke="#e8a655" stroke-width="1.700"/></svg></div>
      <div class="c"><svg width="24" height="26" viewBox="0 0 24 26"><path class="W" d="M1.500 21V11H8v9M8 11V2h6.500v14M14.500 7h6v2"/><path d="M11 18l9-9c2-1.500 3.500 0 2.500 2L15 21z" fill="#292929" stroke="#ddd" stroke-width="1.300"/><path d="M5 24c3 0 2-6 7-6 4 1 4 4 2 6-3 2-7 1-9 0z" fill="#0f7fd8" stroke="#8cc6f0" stroke-width=".8"/></svg></div>
      <div class="c plus"><svg width="22" height="22"><path d="M11 0v22M0 11h22" stroke="#e6e6e6" stroke-width="1.800"/></svg></div>
      <div class="gear"><svg width="26" height="26" viewBox="0 0 26 26"><path d="M10.500 1.500h5l.8 3.600 2.400 1.400 3.600-1.100 2.500 4.300L22 12v2.500l2.800 2.300-2.500 4.300-3.600-1.100-2.400 1.400-.8 3.100h-5l-.8-3.100L7.300 20l-3.600 1.100-2.500-4.300L4 14.500V12L1.200 9.700l2.500-4.300 3.600 1.100 2.400-1.400z" fill="none" stroke="#ddd" stroke-width="1.900" stroke-linejoin="round"/><circle cx="13" cy="13.200" r="4" fill="none" stroke="#ddd" stroke-width="1.900"/></svg></div>
    </aside>
  </main>

  <footer class="status">
    <span>Page 2 of 8</span>
    <div class="zoomer">
      <i class="mn"></i>
      <svg width="126" height="14"><path d="M0 7.500h126" stroke="#ddd" stroke-width="1.200"/><path d="M62.500 4v7" stroke="#bbb"/><path d="M38 0h5v14h-5z" fill="#ddd"/></svg>
      <svg width="10" height="10"><path d="M5 0v10M0 5h10" stroke="#ddd" stroke-width="1.700"/></svg>
      <span class="pct">69%</span>
      <svg class="fit" width="19" height="15" viewBox="0 0 19 15"><rect x="1" y="1" width="17" height="13" rx="1.500" fill="none" stroke="#ddd" stroke-width="1.300"/><path d="M7 4H4.500v2.500M12 4h2.500v2.500M7 11H4.500V8.500M12 11h2.500V8.500" fill="none" stroke="#ddd" stroke-width="1.600"/></svg>
      <span class="upd">Update available (click to download)</span>
    </div>
  </footer>

  <div class="watermark"><p>Activate Windows</p><p class="sub">Go to Settings to activate Windows.</p></div>
</div>
</body>
</html>
```

FILE: styles.css
```css
* { box-sizing: border-box; }
body { margin: 0; background: #141414; font: 14px/20px "Open Sans", "Noto Sans", sans-serif; color: #e8e8e8; overflow: hidden; }
h2, h3, h6, p, ul { margin: 0; padding: 0; font-weight: inherit; }
button { font: inherit; border: 0; padding: 0; color: inherit; }
svg { display: block; flex: none; overflow: visible; }
.defs { position: absolute; }
.app { position: relative; width: 1920px; height: 1030px; display: flex; flex-direction: column; }

/* icon paint */
.a { fill: none; stroke: #b4b4b4; stroke-width: 1.4; }
.w { fill: none; stroke: #dcdcdc; stroke-width: 1.4; }
.l { fill: none; stroke: #4a9ade; stroke-width: 1.4; }
.b { fill: #0063b1; stroke: #6cb0e8; stroke-width: 1.2; }
.g { fill: #666; stroke: #a0a0a0; stroke-width: 1.2; }
.o { fill: #ffb648; stroke: #e87a10; stroke-width: 1; }
.W { fill: none; stroke: #d4d4d4; stroke-width: 1.6; }
.dim { opacity: .75; }
.num { font: 10.5px "Open Sans", sans-serif; fill: #3f97dc; }
.ltr { font-family: "Open Sans", sans-serif; font-weight: 600; fill: #3f97dc; }
.xl { font: bold 14px "Open Sans", sans-serif; fill: #fff; }
.tA { font: 25px "Open Sans", sans-serif; fill: #4f9fdc; }
.fx { font: italic 24px "Liberation Serif", serif; fill: #777; }
.dax { font: bold 8px "Open Sans", sans-serif; fill: #ddd; }

/* title bar */
.titlebar { position: relative; height: 42px; display: flex; }
.tb-left { width: 836px; display: flex; align-items: flex-start; padding: 12px 0 0 21px; }
.undo { margin-left: 18px; }
.redo { margin-left: 19px; }
.doc-name { margin: 2px 0 0 12px; width: 345px; font-size: 15px; letter-spacing: -.27px; white-space: nowrap; color: #dcdcdc; }
.tri { margin-top: 6px; }
.tb-search { width: 500px; height: 30px; margin-top: 6px; background: #1f1f1f; border-radius: 2px; display: flex; align-items: center; padding: 1px 0 0 21px; gap: 14px; font-size: 16px; color: #c4c4c4; }
.tb-right { flex: 1; display: flex; align-items: center; padding: 2px 0 0 317px; }
.signin { width: 58px; font-size: 14.5px; letter-spacing: -.15px; color: #d4d4d4; }
.w-min { margin-left: 41px; }
.w-max { margin-left: 41px; }
.w-cls { margin-left: 41px; }
.topstrip { position: absolute; left: 809px; top: 0; width: 301px; height: 1px; background: #ddd; }
.topstrip i { display: block; margin-left: 120px; width: 60px; height: 1px; background: #0078d4; }

/* menu tabs */
.tabs { height: 46px; display: flex; align-items: flex-start; padding: 6px 7px 0 28px; font-size: 17px; line-height: 30px; color: #d6d6d6; letter-spacing: -.1px; }
.t-file { width: 68px; } .t-home { width: 76px; } .t-insert { width: 73px; } .t-model { width: 103px; } .t-view { width: 67px; } .t-opt { width: 99px; }
.t-home b { display: inline-block; height: 32px; width: 48px; border-bottom: 2px solid #2aac94; color: #fff; font-weight: 600; letter-spacing: -.35px; }
.share { margin-left: auto; width: 105px; height: 30px; border-radius: 5px; background: #0c695a; color: #bfd2ce; display: flex; align-items: center; padding-left: 9px; gap: 6px; font-size: 14.5px; }
.share span { margin-left: 4px; letter-spacing: -.35px; }

/* ribbon */
.ribbon { width: 1900px; height: 125px; margin-left: 10px; background: #292929; border-radius: 12px; display: flex; padding: 5px 0; }
.grp { height: 115px; border-right: 1px solid #3f3f3f; display: flex; flex-direction: column; }
.items { height: 94px; padding-top: 5px; display: flex; justify-content: center; }
.grp h6 { padding-top: 1px; text-align: center; font-size: 12.3px; line-height: 17px; color: #fff; font-weight: 400; letter-spacing: -.1px; }
.g-clip { width: 101px; } .g-data { width: 449px; } .g-query { width: 145px; } .g-insert { width: 511px; }
.g-calc { width: 233px; } .g-sens { width: 91px; } .g-share { width: 74px; } .g-cop { width: 164px; }
.it { display: flex; flex-direction: column; align-items: center; white-space: nowrap; letter-spacing: -.1px; color: #f2f2f2; }
.big { width: 40px; height: 40px; margin-bottom: 4px; }
.it > span { display: flex; align-items: center; height: 20px; }
.off { color: #5f5f5f; }
.cv { width: 8px; height: 6px; margin: 3px 0 0 3px; }
.cv.solo { margin: 2px 0 0; color: #888; }
.w44 { width: 44px; } .w50 { width: 50px; } .w52 { width: 52px; } .w54 { width: 54px; } .w56 { width: 56px; } .w57 { width: 57px; } .w64 { width: 64px; }
.w65 { width: 65px; } .w66 { width: 66px; } .w73 { width: 73px; } .w74 { width: 74px; } .w86 { width: 86px; } .w94 { width: 94px; }
.g-clip .items { justify-content: flex-start; padding-left: 10px; }
.w-paste { width: 50px; }
.smalls { width: 30px; display: flex; flex-direction: column; align-items: center; gap: 12px; }
.g-query .items { padding-right: 2px; }
.g-insert .items { justify-content: flex-start; padding-left: 7px; }
.gallery { width: 317px; height: 77px; margin: 3px 3px 0 2px; border: 1px solid #6a6a6a; border-radius: 5px; display: flex; }
.gal-grid { width: 295px; padding: 9px 0 0 8px; display: grid; grid-template-columns: repeat(9, 32.4px); grid-template-rows: 37px 20px; }
.gal-grid svg { width: 20px; height: 20px; }
.gal-more { flex: 1; border-left: 1px solid #6a6a6a; display: flex; align-items: center; justify-content: center; }
.gal-more .cv { margin: 6px 1px 0 0; }
.g-calc .items { justify-content: flex-start; padding-left: 12px; }
.g-cop .items { justify-content: flex-start; padding-left: 8px; }
.ribbon-end { flex: 1; display: flex; align-items: flex-end; justify-content: flex-end; padding: 0 11px 8px 0; }

/* body */
.main { height: 787px; display: flex; }
.rail { width: 51px; }
.rail div { height: 50px; display: flex; align-items: center; padding-left: 13px; }
.rail .on { border-left: 3px solid #2aac94; padding: 0 0 2px 13px; }
.rail .r2 { padding: 0 0 4px 14px; }
.center { width: 1150px; }
.canvas-row { height: 743px; display: flex; background: #fff; box-shadow: inset 0 6px 6px -4px #ccc; }
.canvas { width: 1109px; }
.visual { width: 904px; height: 508px; margin: 43px 0 72px 78.5px; border: 1px solid #4a3038; border-radius: 18px; overflow: hidden; background: #ab5027; box-shadow: 5px 6px 9px 2px rgba(40, 50, 170, .27); }
.visual h2 { height: 27px; background: #0f1877; color: #a9338a; font: bold 14px/30px Roboto, sans-serif; letter-spacing: .18px; text-align: center; }
.leg text { font: 600 11.5px "Open Sans", sans-serif; fill: #560055; }
.yt text { font: 600 10px "Open Sans", sans-serif; fill: #560055; }
.xt text { font: 600 9.8px "Open Sans", sans-serif; fill: #76244f; }
.ax { font: 11.5px Roboto, sans-serif; fill: #252423; }
.page-edge { height: 2px; width: 1107px; background: repeating-linear-gradient(90deg, #5a5a5a 0 2px, transparent 2px 4px); }
.filters { width: 41px; border-left: 1px solid #b5b5b5; color: #222; display: flex; flex-direction: column; align-items: center; padding-top: 17px; }
.filters svg + svg { margin: 26px 0 12px 6px; }
.filters span { writing-mode: vertical-rl; font-weight: 600; font-size: 17.5px; line-height: 20px; letter-spacing: .1px; }
.flip { transform: scaleX(-1); }

.pages { height: 44px; background: #292929; display: flex; border-left: 1px solid #3f3f3f; }
.views { width: 159px; display: flex; border-right: 1px solid #6a6a6a; }
.v-desk { width: 30px; height: 39px; margin-left: 12px; padding: 8px 0 0 3px; border-bottom: 4px solid #2aac94; }
.v-ph { margin: 7px 0 0 33px; }
.v-a1 { margin: 16px 0 0 27px; } .v-a2 { margin: 16px 0 0 19px; }
.pages > span { width: 95.4px; line-height: 45px; text-align: center; border-right: 1px solid #444; letter-spacing: -.05px; color: #fff; }
.pages .cur { width: 97px; border-bottom: 5px solid #2aac94; font-weight: 600; letter-spacing: -.2px; }
.add { width: 49px; background: #2aac94; display: grid; place-items: center; padding-bottom: 3px; }

/* panes */
.pane { border-left: 1px solid #666; color: #fff; }
.pane header { height: 52px; display: flex; align-items: flex-start; padding: 13px 12px 0 10px; }
.pane h3 { flex: 1; font-size: 18px; line-height: 24px; font-weight: 600; letter-spacing: -.2px; }
.dots { width: 14px; height: 4px; fill: #fff; }
header .dots { margin: 8px 16px 0 0; }
.dbl { width: 10px; height: 10px; margin-top: 5px; }
.p-format { width: 226px; }
.search { height: 32px; width: 205px; margin-left: 10px; border: 1px solid #666; border-radius: 3px; background: #292929; display: flex; align-items: center; padding: 1px 0 0 9px; gap: 7px; font-size: 16px; }
.p-format ul { margin-top: 15px; list-style: none; }
.p-format li { height: 51px; border-bottom: 1px solid #666; display: flex; align-items: center; padding: 2px 0 0 14px; gap: 8px; font-weight: 600; letter-spacing: .02px; }
.p-format li svg { width: 8px; height: 12px; }
.p-build { width: 226px; }
.p-build .lab { margin: -5px 0 0 10px; line-height: 22px; letter-spacing: 0; }
.vizbox { width: 205px; height: 267px; margin: 3px 0 0 10px; border: 1px solid #8a8a8a; border-radius: 3px; background: #000; padding: 7px 0 0 9px; display: grid; grid-template-columns: repeat(6, 32.4px); grid-auto-rows: 32.45px; }
.vizbox svg { width: 23px; height: 23px; }
.vizbox .dots { width: 14px; height: 4px; margin: 8px 0 0 4px; }
.p-build .lab2 { margin-top: 10px; }
.drop { width: 205px; height: 49px; margin: 3px 0 0 10px; padding: 5px; border: 1px dashed #b0b0b0; background: #1f1f1f; }
.drop button { width: 193px; height: 37px; background: #292929; border: 1px solid #999; border-radius: 2px; color: #fff; font-weight: 600; letter-spacing: .15px; }
.p-data { width: 226px; }
.p-data header { height: 57px; }
.s2 { width: 215px; height: 30px; margin-left: 5px; border-radius: 5px; padding-left: 15px; gap: 8px; color: #949494; border-bottom-color: #999; }
.tree { padding: 12px 0 0 20px; }
.tree div { height: 30px; display: flex; align-items: center; letter-spacing: .08px; white-space: nowrap; }
.tree .r { width: 7px; height: 11px; }
.tree .t { width: 16px; height: 16px; margin: 0 6px 1px 9px; }
.strip { width: 41px; border-left: 1px solid #666; background: #292929; display: flex; flex-direction: column; }
.c { height: 40px; border-bottom: 2px solid #666; display: grid; place-items: center; padding-top: 1px; }
.c.plus { background: #1f1f1f; border: 0; padding: 0 0 2px; }
.gear { margin-top: auto; height: 40px; border-top: 1px solid #666; background: #1f1f1f; display: grid; place-items: center; padding-left: 1px; }

/* status */
.status { height: 30px; border-top: 1px solid #666; border-bottom: 1px solid #000; display: flex; justify-content: space-between; line-height: 31px; padding: 0 6px 0 5px; font-size: 14.5px; letter-spacing: -.15px; color: #dcdcdc; }
.zoomer { display: flex; align-items: center; }
.mn { width: 6px; height: 2px; background: #ddd; margin-right: 6px; }
.zoomer svg + svg { margin-left: 6px; }
.pct { width: 53px; margin-left: 17px; letter-spacing: -.5px; }
.upd { width: 239px; margin-left: 17px; white-space: nowrap; letter-spacing: 0; }

.watermark { position: absolute; left: 1554px; top: 922px; color: #808080; white-space: nowrap; }
.watermark p { font-size: 24px; line-height: 36px; letter-spacing: -.1px; }
.watermark .sub { font-size: 17.5px; line-height: 24px; letter-spacing: 0; }
```
